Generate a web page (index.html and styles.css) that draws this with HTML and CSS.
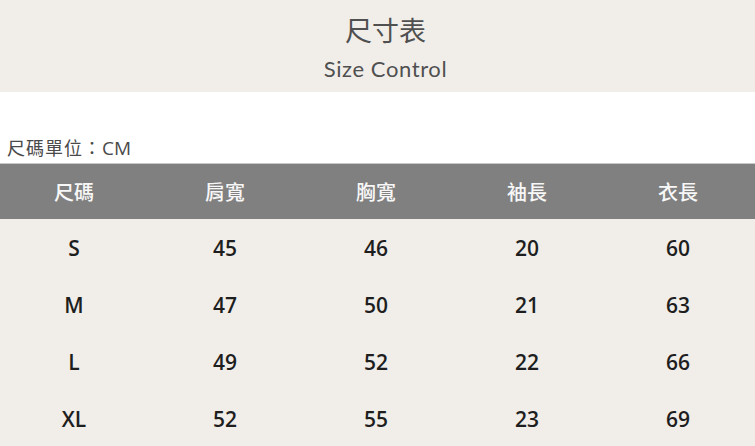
FILE: index.html
```html
<!DOCTYPE html>
<html lang="zh-Hant">
<head>
<meta charset="utf-8">
<link rel="stylesheet" href="styles.css">
</head>
<body>
<header class="banner">
  <h1 class="title">尺寸表</h1>
  <p class="subtitle">Size Control</p>
</header>
<p class="unit">尺碼單位：<span class="unit-cm">CM</span></p>
<div class="table">
  <div class="row head">
    <span>尺碼</span><span>肩寬</span><span>胸寬</span><span>袖長</span><span>衣長</span>
  </div>
  <div class="row"><span>S</span><span>45</span><span>46</span><span>20</span><span>60</span></div>
  <div class="row"><span>M</span><span>47</span><span>50</span><span>21</span><span>63</span></div>
  <div class="row"><span>L</span><span>49</span><span>52</span><span>22</span><span>66</span></div>
  <div class="row"><span>XL</span><span>52</span><span>55</span><span>23</span><span>69</span></div>
</div>
</body>
</html>
```
FILE: styles.css
```css
html, body {
  margin: 0;
  padding: 0;
  background: #ffffff;
  font-family: "Open Sans", "Noto Sans CJK TC", sans-serif;
}
.banner {
  background: #f1eeea;
  height: 92px;
  padding-left: 16px;
  display: flex;
  flex-direction: column;
  align-items: center;
  overflow: hidden;
}
.title {
  margin: 12px 0 0;
  font-size: 27px;
  line-height: 36px;
  font-weight: 400;
  color: #505050;
  font-family: "Noto Sans CJK TC", sans-serif;
}
.subtitle {
  margin: 8px 0 0;
  font-size: 22px;
  line-height: 26px;
  letter-spacing: 0.6px;
  color: #505050;
  font-family: "Lato", sans-serif;
}
.unit {
  margin: 0;
  padding: 42px 0 0 7px;
  height: 29px;
  line-height: 26px;
  font-size: 18px;
  letter-spacing: 1px;
  color: #4a4a4a;
  font-family: "Noto Sans CJK TC", sans-serif;
  box-sizing: content-box;
}
.unit-cm {
  font-family: "Open Sans", sans-serif;
  font-size: 19px;
  letter-spacing: 0;
}
.table {
  background: #f1eeea;
}
.row {
  display: grid;
  grid-template-columns: repeat(5, 1fr);
  height: 57px;
  align-items: center;
  text-align: center;
  font-size: 21px;
  font-weight: 600;
  color: #1e1e1e;
}
.row span {
  margin-left: -3px;
}
.row.head {
  height: 56px;
  background: #808080;
  border-top: 1px solid #c8c8c8;
  box-sizing: border-box;
  color: #f7f7f7;
  font-weight: 500;
  font-size: 20px;
  font-family: "Noto Sans CJK TC", sans-serif;
}
```
